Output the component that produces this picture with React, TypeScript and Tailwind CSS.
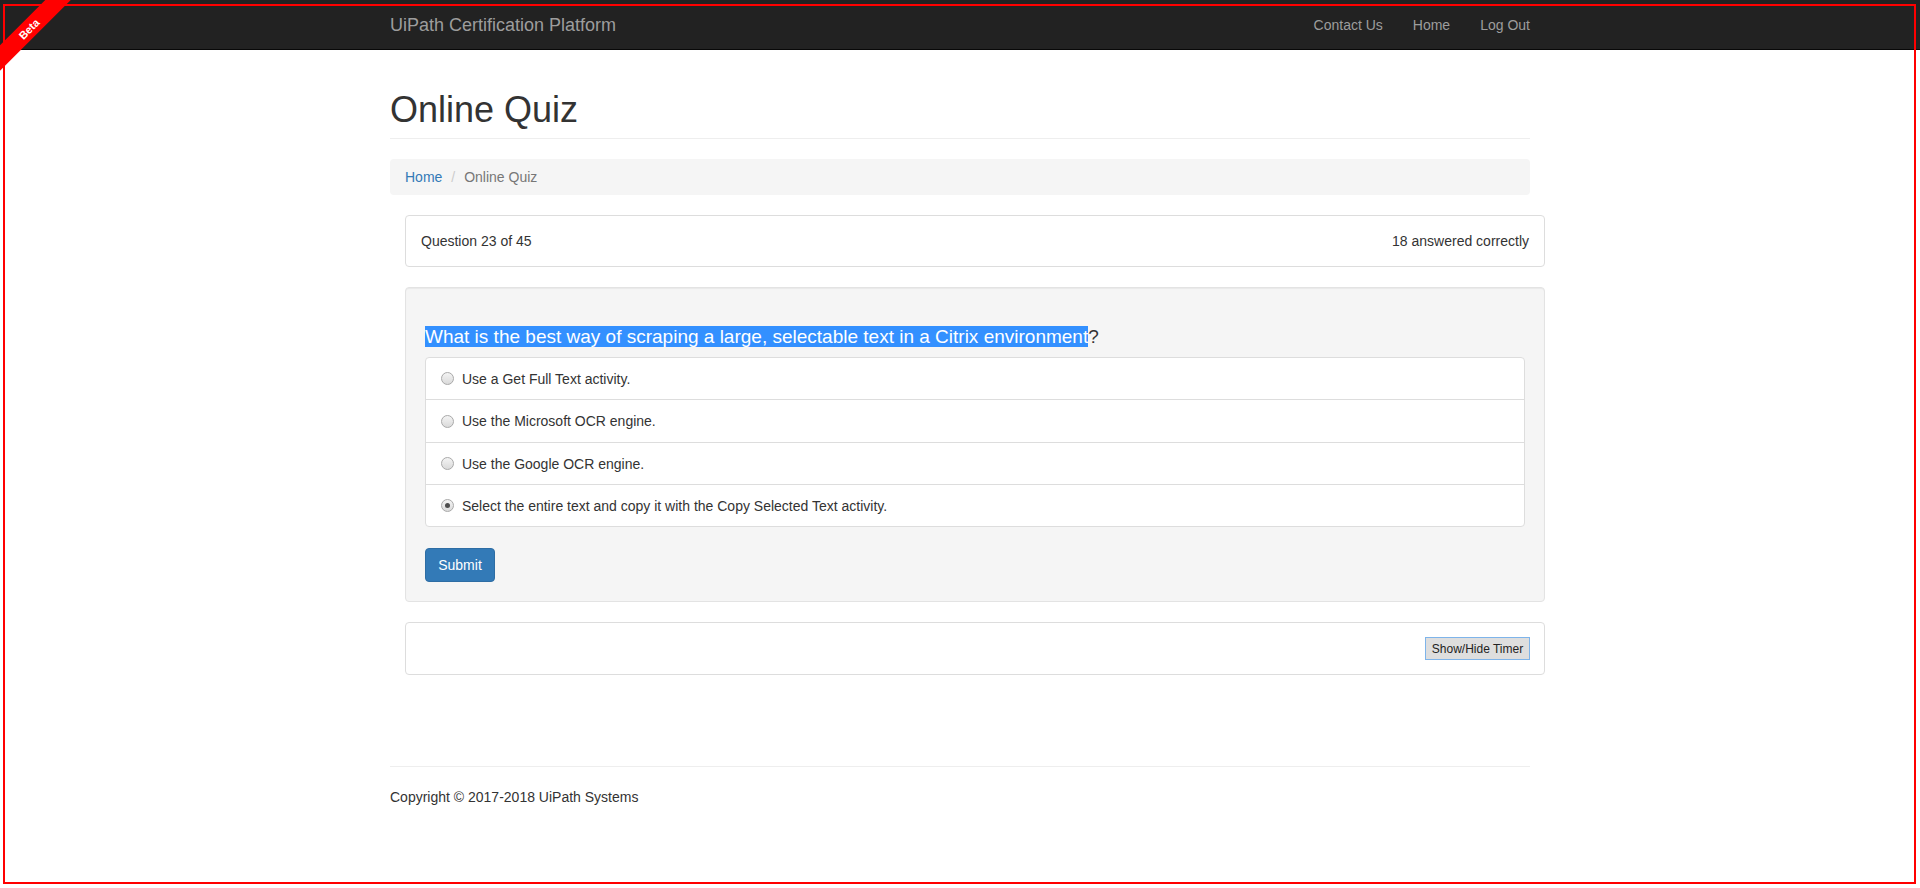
import { useState } from 'react';

const options = [
  'Use a Get Full Text activity.',
  'Use the Microsoft OCR engine.',
  'Use the Google OCR engine.',
  'Select the entire text and copy it with the Copy Selected Text activity.',
];

// row heights include the top separator line
const rowHeights = ['h-[41px]', 'h-[43px]', 'h-[42px]', 'h-[42px]'];

function Radio({ checked }: { checked: boolean }) {
  return (
    <span className="flex h-[13px] w-[13px] shrink-0 items-center justify-center rounded-full border border-[#a9a9a9] bg-gradient-to-b from-[#f4f4f4] to-[#dadada]">
      {checked && <span className="h-[5px] w-[5px] rounded-full bg-[#4d4d4d]" />}
    </span>
  );
}

export default function App() {
  const [selected, setSelected] = useState(3);

  return (
    <div className="relative min-h-[888px] overflow-hidden bg-white font-['Liberation_Sans',Arial,sans-serif] text-[14px] leading-[20px] text-[#333]">
      {/* navbar */}
      <nav className="h-[50px] border-b border-[#080808] bg-[#222]">
        <div className="mx-auto flex h-full w-[1140px] items-center justify-between">
          <a className="text-[18px] leading-[20px] text-[#9d9d9d]">UiPath Certification Platform</a>
          <ul className="mr-[-15px] flex h-full items-center">
            <li className="px-[15px] text-[#9d9d9d]">Contact Us</li>
            <li className="px-[15px] text-[#9d9d9d]">Home</li>
            <li className="px-[15px] text-[#9d9d9d]">Log Out</li>
          </ul>
        </div>
      </nav>

      <div className="mx-auto w-[1140px]">
        <div className="mt-[40px] border-b border-[#eee] pb-[8px]">
          <h1 className="text-[36px] font-normal leading-[40px] text-[#333]">Online Quiz</h1>
        </div>

        <ol className="mt-[20px] flex h-[36px] items-center rounded-[4px] bg-[#f5f5f5] px-[15px]">
          <li className="text-[#337ab7]">Home</li>
          <li className="ml-[4px] px-[5px] text-[#ccc]">/&nbsp;</li>
          <li className="text-[#777]">Online Quiz</li>
        </ol>

        <div className="ml-[15px] mt-[20px] w-[1140px]">
          <div className="flex h-[52px] items-center justify-between rounded-[4px] border border-[#ddd] bg-white px-[15px]">
            <span>Question 23 of 45</span>
            <span>18 answered correctly</span>
          </div>

          <div className="mt-[20px] rounded-[4px] border border-[#e3e3e3] bg-[#f5f5f5] p-[19px] shadow-[inset_0_1px_1px_rgba(0,0,0,0.05)]">
            <h4 className="mt-[20px] mb-[10px] text-[19px] font-normal leading-[20px] text-[#333]">
              <span className="bg-[#3390ff] text-white">
                What is the best way of scraping a large, selectable text in a Citrix environment
              </span>
              ?
            </h4>
            <div className="rounded-[4px] border border-[#ddd] bg-white">
              {options.map((opt, i) => (
                <label
                  key={opt}
                  onClick={() => setSelected(i)}
                  className={`flex items-center gap-[8px] px-[15px] ${rowHeights[i]} ${i > 0 ? 'border-t border-[#ddd]' : ''}`}
                >
                  <Radio checked={selected === i} />
                  <span>{opt}</span>
                </label>
              ))}
            </div>
            <button className="mt-[21px] h-[34px] w-[70px] rounded-[4px] border border-[#2e6da4] bg-[#337ab7] text-[14px] text-white">
              Submit
            </button>
          </div>

          <div className="mt-[20px] flex h-[53px] items-start justify-end rounded-[4px] border border-[#ddd] bg-white pr-[14px] pt-[14px]">
            <button className="h-[23px] w-[105px] border border-[#7eb4ea] bg-[#dedede] text-[12px] leading-[20px] text-[#222]">
              Show/Hide Timer
            </button>
          </div>
        </div>

        <footer className="mt-[91px] border-t border-[#eee] pt-[20px]">
          <p>Copyright © 2017-2018 UiPath Systems</p>
        </footer>
      </div>

      {/* red frame */}
      <div className="pointer-events-none absolute left-[3px] top-[4px] h-[880px] w-[1913px] border-2 border-[#ff0000]" />

      {/* beta ribbon */}
      <div className="pointer-events-none absolute left-0 top-0 h-[80px] w-[80px] overflow-hidden">
        <div className="absolute left-[-31px] top-[20px] flex h-[18px] w-[120px] -rotate-45 items-center justify-center bg-[#ff0000] text-[11px] font-bold text-white">
          Beta
        </div>
      </div>
    </div>
  );
}
